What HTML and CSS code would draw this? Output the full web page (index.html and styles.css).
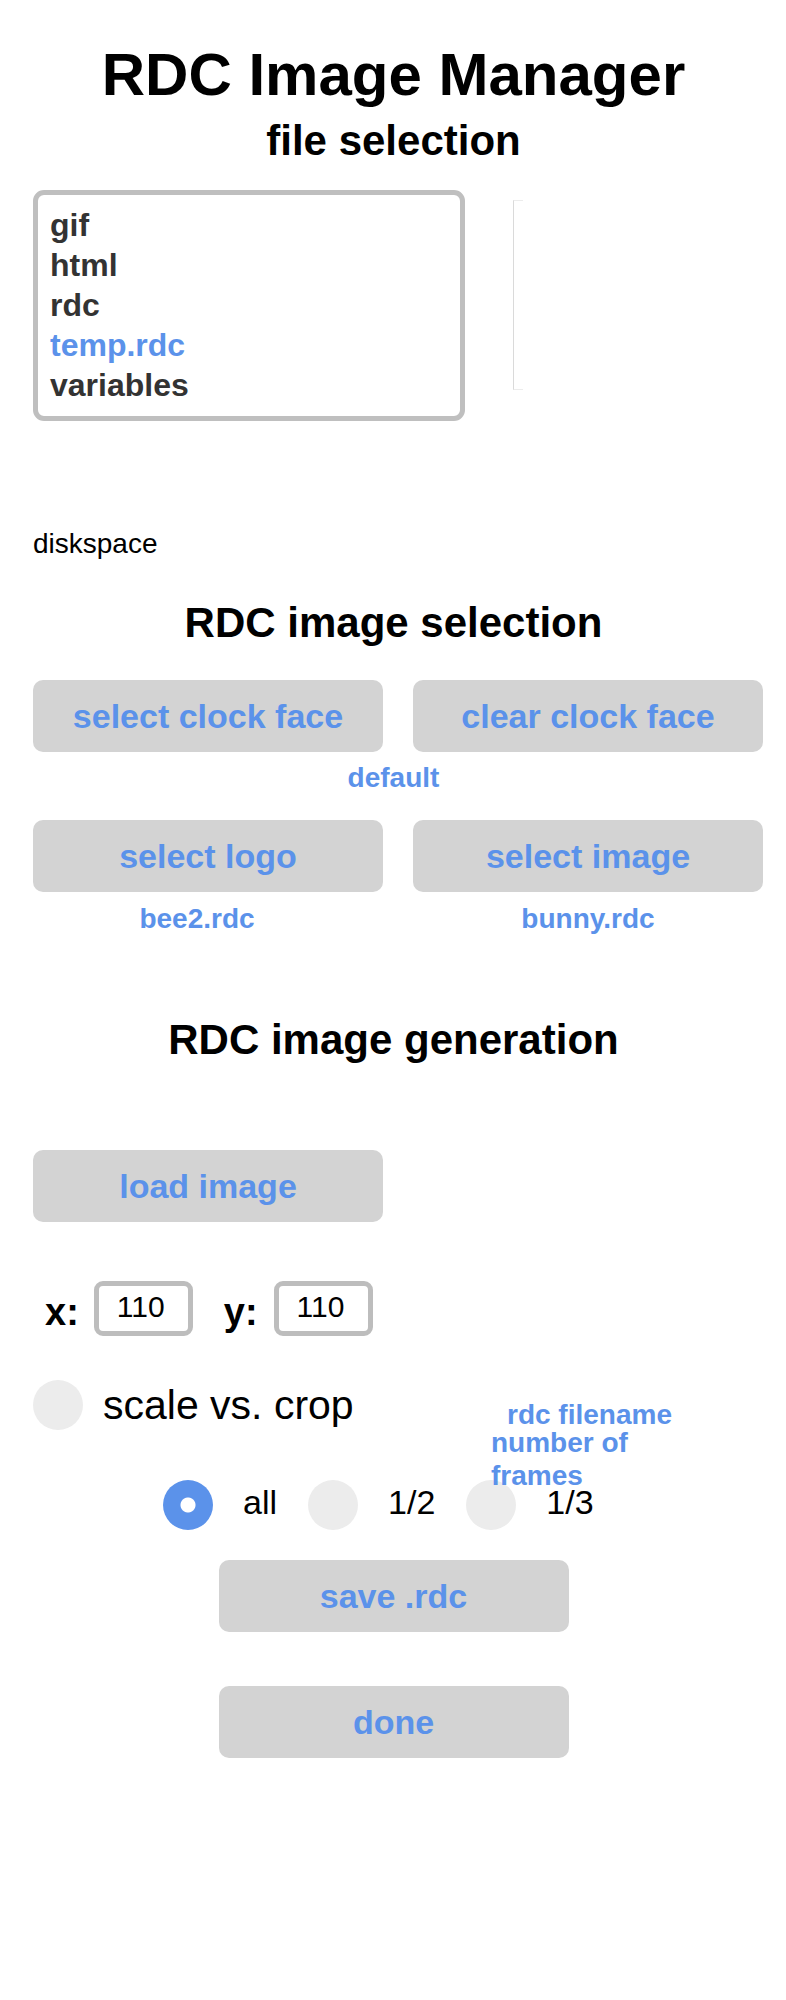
FILE: index.html
```html
<!DOCTYPE html>
<html lang="en">
<head>
<meta charset="utf-8">
<title>RDC Image Manager</title>
<link rel="stylesheet" href="styles.css">
</head>
<body>
<main class="page">
  <h1 class="title">RDC Image Manager</h1>
  <h2 class="heading heading-file">file selection</h2>

  <div class="files">
    <ul class="listbox">
      <li>gif</li>
      <li>html</li>
      <li>rdc</li>
      <li class="selected">temp.rdc</li>
      <li>variables</li>
    </ul>
    <div class="preview"></div>
  </div>

  <div class="disk">diskspace</div>

  <h2 class="heading heading-sel">RDC image selection</h2>

  <div class="btn-grid row-first">
    <button class="btn">select clock face</button>
    <button class="btn">clear clock face</button>
  </div>
  <div class="note note-default">default</div>
  <div class="btn-grid row-second">
    <button class="btn">select logo</button>
    <button class="btn">select image</button>
  </div>
  <div class="btn-grid notes">
    <div class="note note-left">bee2.rdc</div>
    <div class="note">bunny.rdc</div>
  </div>

  <h2 class="heading heading-gen">RDC image generation</h2>

  <div class="btn-grid row-load">
    <button class="btn">load image</button>
  </div>

  <div class="xy">
    <label class="xy-label" for="xval">x:</label>
    <input class="num" id="xval" type="text" value="110">
    <label class="xy-label xy-label-y" for="yval">y:</label>
    <input class="num" id="yval" type="text" value="110">
  </div>

  <div class="options">
    <div class="scale-row">
      <input class="radio" type="checkbox" id="scale">
      <label class="scale-label" for="scale">scale vs. crop</label>
    </div>
    <div class="frames">
      <input class="radio" type="radio" name="fr" id="fr-all" checked>
      <label class="fr-label" for="fr-all">all</label>
      <input class="radio" type="radio" name="fr" id="fr-2">
      <label class="fr-label" for="fr-2">1/2</label>
      <input class="radio" type="radio" name="fr" id="fr-3">
      <label class="fr-label" for="fr-3">1/3</label>
    </div>
    <div class="overlay">
      <div class="ov-file">rdc filename</div>
      <div class="ov-frames">number of frames</div>
    </div>
  </div>

  <button class="btn btn-center btn-save">save .rdc</button>
  <button class="btn btn-center btn-done">done</button>
</main>
</body>
</html>
```

FILE: styles.css
```css
* {
  box-sizing: border-box;
}

html, body {
  margin: 0;
  padding: 0;
  background: #ffffff;
}

body {
  font-family: "Liberation Sans", Arial, Helvetica, sans-serif;
  color: #000000;
}

.page {
  padding: 40px 32px 200px 33px;
}

.title {
  margin: 0;
  font-size: 60px;
  line-height: 70px;
  font-weight: bold;
  text-align: center;
}

.heading {
  margin: 0;
  font-size: 42px;
  line-height: 50px;
  font-weight: bold;
  text-align: center;
}

.heading-file {
  margin-top: 6px;
}

.files {
  margin-top: 24px;
  display: flex;
  align-items: flex-start;
}

.listbox {
  list-style: none;
  margin: 0;
  width: 432px;
  height: 231px;
  padding: 10px 12px 11px 12px;
  border: 5px solid #bfbfbf;
  border-radius: 11px;
  font-size: 32px;
  line-height: 40px;
  font-weight: bold;
  color: #333333;
}

.listbox .selected {
  color: #5b92ea;
}

.preview {
  margin-left: 48px;
  margin-top: 10px;
  width: 10px;
  height: 190px;
  border: 1px solid #ececec;
  border-left-color: #dadada;
  border-right: none;
}

.disk {
  margin-top: 107px;
  font-size: 28px;
  line-height: 32px;
}

.heading-sel {
  margin-top: 38px;
}

.btn-grid {
  display: grid;
  grid-template-columns: 350px 350px;
  column-gap: 30px;
}

.row-first {
  margin-top: 32px;
}

.row-second {
  margin-top: 26px;
}

.row-load {
  margin-top: 85px;
}

.btn {
  display: flex;
  align-items: center;
  justify-content: center;
  width: 350px;
  height: 72px;
  margin: 0;
  padding: 0;
  border: none;
  border-radius: 10px;
  background: #d3d3d3;
  color: #5b92ea;
  font-family: "Liberation Sans", Arial, Helvetica, sans-serif;
  font-size: 34px;
  font-weight: bold;
}

.note {
  font-size: 28px;
  line-height: 32px;
  font-weight: bold;
  color: #5b92ea;
  text-align: center;
}

.note-default {
  margin-top: 10px;
}

.notes {
  margin-top: 11px;
}

.note-left {
  padding-right: 22px;
}

.heading-gen {
  margin-top: 80px;
}

.xy {
  margin-top: 59px;
  height: 55px;
  display: flex;
  align-items: center;
  padding-left: 12px;
}

.xy-label {
  align-self: flex-end;
  font-size: 38px;
  line-height: 47px;
  font-weight: bold;
  margin-right: 15px;
}

.xy-label-y {
  margin-left: 31px;
  margin-right: 16px;
}

.num {
  width: 99px;
  height: 55px;
  margin: 0;
  padding: 0 0 4px 18px;
  border: 5px solid #bdbdbd;
  border-radius: 9px;
  background: #ffffff;
  font-family: "Liberation Sans", Arial, Helvetica, sans-serif;
  font-size: 30px;
  color: #000000;
  outline: none;
}

.options {
  position: relative;
  margin-top: 44px;
}

.scale-row {
  display: flex;
  align-items: center;
  height: 50px;
}

.radio {
  appearance: none;
  -webkit-appearance: none;
  flex: none;
  width: 50px;
  height: 50px;
  margin: 0;
  border: none;
  border-radius: 50%;
  background: #ececec;
}

.radio:checked {
  background: radial-gradient(circle, #ffffff 0, #ffffff 7px, #5b92ea 8px, #5b92ea 100%);
}

.scale-label {
  margin-left: 20px;
  font-size: 41px;
  line-height: 50px;
}

.frames {
  margin-top: 50px;
  margin-left: 130px;
  height: 50px;
  display: flex;
  align-items: center;
  gap: 30px;
}

.fr-label {
  font-size: 34px;
  line-height: 44px;
  margin-bottom: 6px;
}

.fr-label + .radio {
  margin-left: 1px;
}

.overlay {
  position: absolute;
  top: 24px;
  left: 458px;
  width: 190px;
  font-size: 28px;
  font-weight: bold;
  color: #5b92ea;
}

.ov-file {
  margin-left: 16px;
  line-height: 22px;
}

.ov-frames {
  line-height: 33px;
}

.btn-center {
  margin-left: auto;
  margin-right: auto;
}

.btn-save {
  margin-top: 30px;
}

.btn-done {
  margin-top: 54px;
}
```
